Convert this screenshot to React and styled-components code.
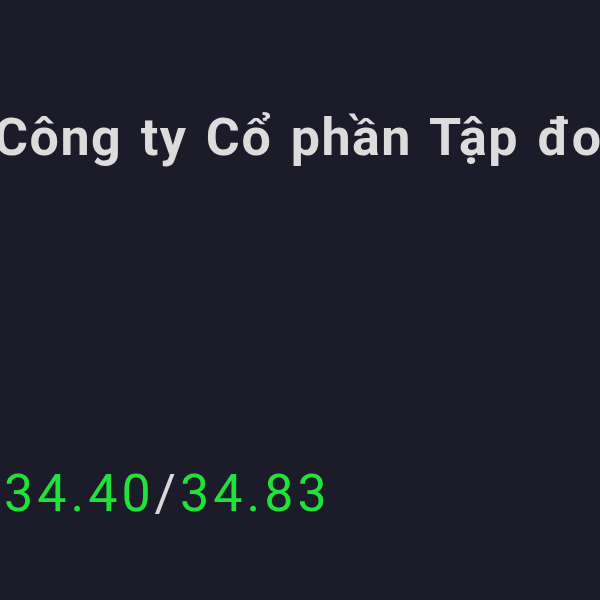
import React from "react";
import styled, { createGlobalStyle } from "styled-components";

const Global = createGlobalStyle`
  html, body { margin: 0; padding: 0; background: #1c1b29; }
  body { width: 600px; height: 600px; overflow: hidden; }
`;

const Page = styled.div`
  width: 600px;
  height: 600px;
  background: #1c1b29;
  overflow: hidden;
  display: flex;
  flex-direction: column;
  font-family: Roboto, "Noto Sans", sans-serif;
`;

const Title = styled.div`
  margin: 103px 0 0 -6px;
  white-space: nowrap;
  font-size: 52px;
  font-weight: 700;
  letter-spacing: 1.5px;
  word-spacing: 4px;
  color: #dcdcdc;
  line-height: 70px;
`;

const Price = styled.div`
  margin: 291px 0 0 4px;
  white-space: nowrap;
  font-size: 52px;
  letter-spacing: 4px;
  line-height: 60px;
  color: #1fe33a;
`;

const Slash = styled.span`
  color: #d8d8d8;
`;

export default function App() {
  return (
    <Page>
      <Global />
      <Title>Công ty Cổ phần Tập đoàn</Title>
      <Price>
        34.40<Slash>/</Slash>34.83
      </Price>
    </Page>
  );
}
